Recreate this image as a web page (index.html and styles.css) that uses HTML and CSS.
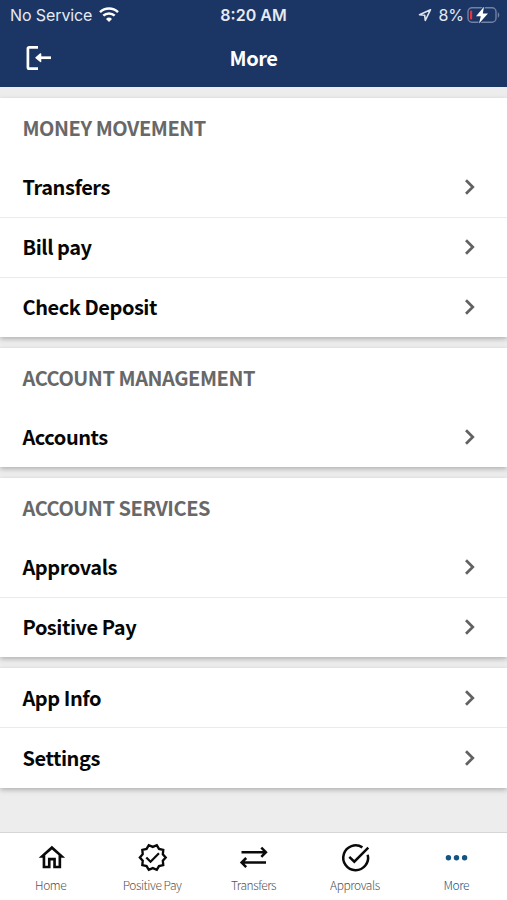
FILE: index.html
```html
<!DOCTYPE html>
<html lang="en">
<head>
    <meta charset="UTF-8">
    <meta name="viewport" content="width=device-width, initial-scale=1.0">
    <title>More</title>
    <link rel="stylesheet" href="styles.css">
</head>
<body>
    <svg class="sprite" width="0" height="0">
        <symbol id="chevron" viewBox="0 0 12 18">
            <path d="M2 2.2l6.8 6.8-6.8 6.8" fill="none" stroke="currentColor" stroke-width="2.7"/>
        </symbol>
    </svg>

    <header class="header">
        <div class="status-bar">
            <div class="status-left">
                <span>No Service</span>
                <svg class="wifi" width="20" height="15" viewBox="0 0 20 15" fill="none" stroke="#fff" stroke-width="2.5">
                    <path d="M1 5.1a13 13 0 0 1 18 0"/>
                    <path d="M4.3 8.7a8.2 8.2 0 0 1 11.4 0"/>
                    <path d="M10 15L7 11.9a4.4 4.4 0 0 1 6 0z" fill="#fff" stroke="none"/>
                </svg>
            </div>
            <div class="status-time">8:20 AM</div>
            <div class="status-right">
                <svg width="14" height="14" viewBox="0 0 14 14" fill="none" stroke="#dfe4ee" stroke-width="1.6" stroke-linejoin="round">
                    <path d="M12.5 1.7L1.5 6.7l5.2.6.6 5.2z"/>
                </svg>
                <span class="percent">8%</span>
                <svg class="battery" width="33" height="18" viewBox="0 0 33 18">
                    <rect x="1" y="1.7" width="28" height="14.6" rx="4" fill="none" stroke="#7282a2" stroke-width="1.4"/>
                    <path d="M30.8 6.3v5.4c2-1 2-4.4 0-5.4z" fill="#7282a2"/>
                    <rect x="3" y="4.5" width="2.2" height="9" rx="1" fill="#e5353f"/>
                    <path d="M17 .8L9 10.2h4.8L12 17.4l9-9.9h-5.2z" fill="#fff" stroke="#1b3564" stroke-width="1.6" paint-order="stroke"/>
                </svg>
            </div>
        </div>
        <div class="nav-bar">
            <a class="logout" href="#" aria-label="Log out">
                <svg width="28" height="28" viewBox="0 0 28 28" fill="none" stroke="#fff" stroke-width="2.7">
                    <path d="M14 3.3H5.4a1.5 1.5 0 0 0-1.5 1.5v18.4a1.5 1.5 0 0 0 1.5 1.5H14"/>
                    <path d="M27 13.7H13"/>
                    <path d="M16.6 9.9v7.6L12 13.7z" fill="#fff" stroke-width="1.4" stroke-linejoin="round"/>
                </svg>
            </a>
            <h1>More</h1>
        </div>
    </header>

    <main class="content">
        <section class="card">
            <h2>MONEY MOVEMENT</h2>
            <a class="row" href="#"><span>Transfers</span><svg><use href="#chevron"/></svg></a>
            <a class="row" href="#"><span>Bill pay</span><svg><use href="#chevron"/></svg></a>
            <a class="row" href="#"><span>Check Deposit</span><svg><use href="#chevron"/></svg></a>
        </section>

        <section class="card">
            <h2>ACCOUNT MANAGEMENT</h2>
            <a class="row" href="#"><span>Accounts</span><svg><use href="#chevron"/></svg></a>
        </section>

        <section class="card">
            <h2>ACCOUNT SERVICES</h2>
            <a class="row" href="#"><span>Approvals</span><svg><use href="#chevron"/></svg></a>
            <a class="row" href="#"><span>Positive Pay</span><svg><use href="#chevron"/></svg></a>
        </section>

        <section class="card plain">
            <a class="row" href="#"><span>App Info</span><svg><use href="#chevron"/></svg></a>
            <a class="row" href="#"><span>Settings</span><svg><use href="#chevron"/></svg></a>
        </section>
    </main>

    <nav class="tab-bar">
        <a class="tab" href="#">
            <svg viewBox="0 0.1 23.4 23.4">
                <path d="M12 5.69l5 4.5V18h-2v-6H9v6H7v-7.81l5-4.5M12 3L2 12h3v8h6v-6h2v6h6v-8h3L12 3z" fill="currentColor"/>
            </svg>
            <span>Home</span>
        </a>
        <a class="tab" href="#">
            <svg viewBox="0 0 24 24" fill="none" stroke="currentColor">
                <path transform="translate(1.3 1.08) scale(.91)" stroke-width="2" d="M23 12l-2.44-2.78.34-3.68-3.61-.82-1.89-3.18L12 3 8.6 1.54 6.71 4.72l-3.61.81.34 3.68L1 12l2.44 2.78-.34 3.69 3.61.82 1.89 3.18L12 21l3.4 1.46 1.89-3.18 3.61-.82-.34-3.68L23 12z"/>
                <path d="M7.2 12l3.3 3.3L17 8.7" stroke-width="1.7"/>
            </svg>
            <span>Positive Pay</span>
        </a>
        <a class="tab" href="#">
            <svg viewBox="0 0 31 31" fill="none" stroke="currentColor" stroke-width="2.5">
                <path d="M3.5 10.2h24M23.3 5.6l4.6 4.6-4.6 4.6"/>
                <path d="M28 20.6H4M8.2 16l-4.6 4.6 4.6 4.6"/>
            </svg>
            <span>Transfers</span>
        </a>
        <a class="tab" href="#">
            <svg viewBox="0 0 31 31" fill="none" stroke="currentColor" stroke-width="2.5">
                <path d="M22.4 5.4A12.4 12.4 0 1 0 27.7 12.8"/>
                <path d="M9.3 14.8l5 4.9L28.3 5.6"/>
            </svg>
            <span>Approvals</span>
        </a>
        <a class="tab active" href="#">
            <svg viewBox="0 0 31 31" fill="currentColor">
                <circle cx="7.4" cy="15.7" r="2.7"/>
                <circle cx="15.5" cy="15.7" r="2.7"/>
                <circle cx="23.6" cy="15.7" r="2.7"/>
            </svg>
            <span>More</span>
        </a>
    </nav>
</body>
</html>
```
FILE: styles.css
```css
* {
    margin: 0;
    padding: 0;
    box-sizing: border-box;
}

body {
    display: flex;
    flex-direction: column;
    height: 100vh;
    overflow: hidden;
    font-family: 'Noto Sans CJK SC', 'Noto Sans', sans-serif;
    font-feature-settings: 'liga' 1;
    letter-spacing: -0.45px;
    background: #ededed;
    color: #060606;
}

a {
    color: inherit;
    text-decoration: none;
}

svg {
    display: block;
    flex-shrink: 0;
}

.sprite {
    position: absolute;
}

.header {
    height: 87px;
    background: #1b3564;
    color: #fff;
}

.status-bar {
    display: grid;
    grid-template-columns: 1fr auto 1fr;
    align-items: center;
    height: 29px;
    padding: 0 10px;
    font-family: Inter, sans-serif;
    font-size: 16px;
    letter-spacing: 0;
    color: #e6eaf2;
}

.status-left,
.status-right {
    display: flex;
    align-items: center;
}

.status-left {
    gap: 7px;
    letter-spacing: -0.1px;
}

.status-right {
    justify-content: flex-end;
}

.status-time {
    font-weight: 600;
}

.percent {
    margin: 0 3px 0 6px;
}

.battery {
    margin-right: -3px;
}

.nav-bar {
    display: grid;
    grid-template-columns: 1fr auto 1fr;
    align-items: center;
    height: 57px;
    padding: 0 24px;
}

.nav-bar h1 {
    font-size: 20px;
    font-weight: 700;
    line-height: 30px;
}

.content {
    display: flex;
    flex-direction: column;
    flex: 1;
    gap: 11px;
    padding-top: 11px;
}

.card {
    background: #fff;
    box-shadow: 0 2px 5px rgba(0, 0, 0, 0.26);
}

.card h2 {
    height: 60px;
    padding-left: 22.5px;
    font-size: 20px;
    font-weight: 700;
    line-height: 60px;
    color: #686868;
}

.row {
    display: flex;
    align-items: center;
    justify-content: space-between;
    height: 60px;
    padding: 0 31px 2px 22.5px;
    border-bottom: 1px solid #ebebeb;
    font-size: 20px;
    font-weight: 700;
}

.row:last-child {
    height: 59px;
    border-bottom: none;
}

.plain .row {
    height: 60px;
    padding-bottom: 0;
}

.plain .row:last-child {
    padding-bottom: 1px;
}

.row svg {
    width: 12px;
    height: 18px;
    color: #626262;
}

.tab-bar {
    display: grid;
    grid-template-columns: repeat(5, 1fr);
    height: 68px;
    background: #fff;
    border-top: 1px solid #d6d6d6;
}

.tab {
    display: flex;
    flex-direction: column;
    align-items: center;
    padding-top: 9px;
    font-size: 12px;
    font-weight: 300;
    line-height: 17px;
    color: #555;
}

.tab svg {
    width: 31px;
    height: 31px;
    margin: 0 0 3px 1px;
    color: #0a0a0a;
}

.tab.active,
.tab.active svg {
    color: #145482;
}
```
